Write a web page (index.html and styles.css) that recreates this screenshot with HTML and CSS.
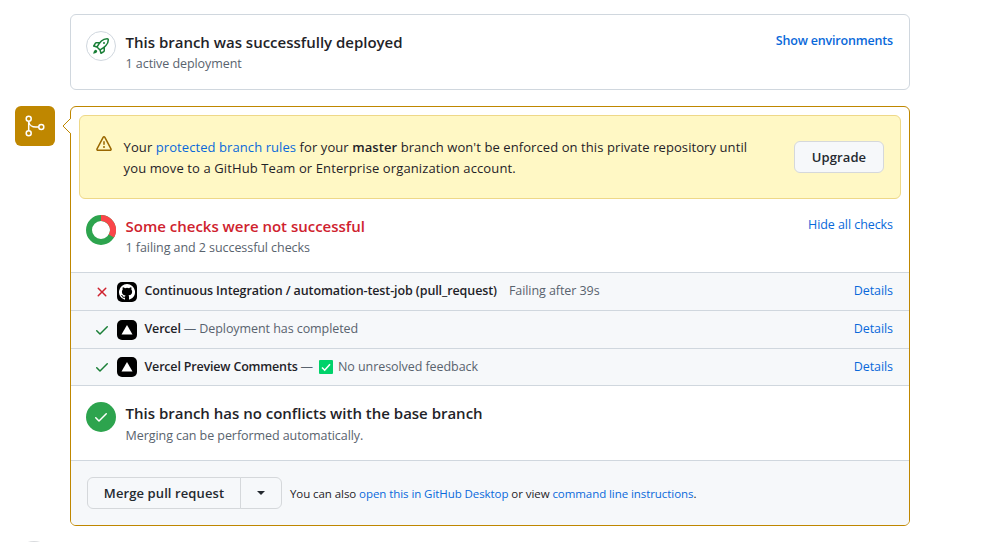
FILE: index.html
```html
<!DOCTYPE html>
<html lang="en">
<head>
<meta charset="utf-8">
<title>Merge status</title>
<link rel="stylesheet" href="styles.css">
</head>
<body>
<main class="page">
  <section class="card deploy">
    <span class="round-icon round-outline">
      <svg width="16" height="16" viewBox="0 0 16 16" fill="currentColor"><path d="M14.064 0h.186C15.216 0 16 .784 16 1.75v.186a8.752 8.752 0 0 1-2.564 6.186l-.458.459c-.314.314-.641.616-.979.904v3.207c0 .608-.315 1.172-.833 1.49l-2.774 1.707a.749.749 0 0 1-1.11-.418l-.954-3.102a1.214 1.214 0 0 1-.145-.125L3.754 9.816a1.218 1.218 0 0 1-.124-.145L.528 8.717a.749.749 0 0 1-.418-1.11l1.71-2.774A1.748 1.748 0 0 1 3.31 4h3.204c.288-.338.59-.665.904-.979l.459-.458A8.749 8.749 0 0 1 14.064 0ZM8.938 3.623h-.002l-.458.458c-.76.76-1.437 1.598-2.02 2.5l-1.5 2.317 2.143 2.143 2.317-1.5c.902-.583 1.74-1.26 2.499-2.02l.459-.458a7.25 7.25 0 0 0 2.123-5.127V1.75a.25.25 0 0 0-.25-.25h-.186a7.249 7.249 0 0 0-5.125 2.123ZM3.56 14.56c-.732.732-2.334 1.045-3.005 1.148a.234.234 0 0 1-.201-.064.234.234 0 0 1-.064-.201c.103-.671.416-2.273 1.15-3.003a1.502 1.502 0 1 1 2.12 2.12Zm6.94-3.935c-.088.06-.177.118-.266.175l-2.35 1.521.548 1.783 1.949-1.2a.25.25 0 0 0 .119-.213ZM3.678 8.116 5.2 5.766c.058-.09.117-.178.176-.266H3.309a.25.25 0 0 0-.213.119l-1.2 1.95ZM12 5a1 1 0 1 1-2 0 1 1 0 0 1 2 0Z"/></svg>
    </span>
    <div class="summary">
      <h3 class="title">This branch was successfully deployed</h3>
      <p class="sub">1 active deployment</p>
    </div>
    <a class="link strong action">Show environments</a>
  </section>

  <div class="merge">
    <div class="merge-badge">
      <svg width="24" height="24" viewBox="0 0 24 24" fill="none" stroke="currentColor" stroke-width="1.5"><circle cx="5.7" cy="4.7" r="2.5"/><circle cx="5.7" cy="19.3" r="2.5"/><circle cx="18.3" cy="13" r="2.5"/><path d="M5.7 7.2v9.600M5.700 7.500c.5 3.500 3.600 5.500 7 5.500h3.100"/></svg>
    </div>
    <section class="card merge-box">
      <svg class="pointer" width="9" height="16" viewBox="0 0 9 16"><path d="M9 .5 1 8l8 7.500Z" fill="#fff"/><path d="M8.500.500 1 8l7.500 7.500" fill="none" stroke="#bf8700"/></svg>
      <div class="warning">
        <svg class="alert" width="16" height="16" viewBox="0 0 16 16" fill="currentColor"><path d="M6.457 1.047c.659-1.234 2.427-1.234 3.086 0l6.082 11.378A1.750 1.750 0 0 1 14.082 15H1.918a1.750 1.750 0 0 1-1.543-2.575Zm1.763.707a.250.250 0 0 0-.440 0L1.698 13.132a.250.250 0 0 0 .220.368h12.164a.250.250 0 0 0 .220-.368Zm.530 3.996v2.500a.750.750 0 0 1-1.500 0v-2.500a.750.750 0 0 1 1.500 0ZM9 11a1 1 0 1 1-2 0 1 1 0 0 1 2 0Z"/></svg>
        <p class="warning-text">Your <a class="link">protected branch rules</a> for your <b>master</b> branch won't be enforced on this private repository until<br><span class="second">you move to a GitHub Team or Enterprise organization account.</span></p>
        <button class="btn upgrade">Upgrade</button>
      </div>

      <div class="row checks-head">
        <svg class="donut" width="30" height="30" viewBox="0 0 30 30"><circle cx="15" cy="15" r="12" fill="none" stroke="#2da44e" stroke-width="6"/><path d="M15 3a12 12 0 0 1 10.390 18" fill="none" stroke="#fa4549" stroke-width="6"/></svg>
        <div class="summary">
          <h3 class="title danger">Some checks were not successful</h3>
          <p class="sub">1 failing and 2 successful checks</p>
        </div>
        <a class="link action">Hide all checks</a>
      </div>

      <ul class="checks">
        <li class="check">
          <svg class="fail" width="16" height="16" viewBox="0 0 16 16" fill="currentColor"><path d="M3.720 3.720a.750.750 0 0 1 1.060 0L8 6.940l3.220-3.220a.750.750 0 1 1 1.060 1.060L9.060 8l3.220 3.220a.750.750 0 1 1-1.060 1.060L8 9.060l-3.220 3.220a.750.750 0 0 1-1.060-1.060L6.940 8 3.720 4.780a.750.750 0 0 1 0-1.060Z"/></svg>
          <span class="app"><svg width="16" height="16" viewBox="0 0 16 16" fill="#fff"><path d="M8 0a8 8 0 0 0-2.530 15.590c.400.070.550-.170.550-.380v-1.490c-2.010.370-2.530-.490-2.690-.940-.090-.230-.480-.940-.820-1.130-.280-.150-.680-.520-.010-.530.630-.010 1.080.580 1.230.820.720 1.210 1.870.870 2.330.660.070-.520.280-.870.510-1.070-1.780-.200-3.640-.890-3.640-3.950 0-.870.310-1.590.820-2.150-.080-.200-.360-1.020.080-2.120 0 0 .670-.210 2.200.820a7.420 7.420 0 0 1 4 0c1.530-1.040 2.200-.820 2.200-.820.440 1.100.160 1.920.080 2.120.510.560.820 1.270.820 2.150 0 3.070-1.870 3.750-3.650 3.950.290.250.540.730.540 1.480v2.200c0 .210.150.460.550.380A8 8 0 0 0 8 0Z"/></svg></span>
          <span class="name">Continuous Integration / automation-test-job (pull_request)</span>
          <span class="desc gap">Failing after 39s</span>
          <a class="link details">Details</a>
        </li>
        <li class="check">
          <svg class="ok" width="16" height="16" viewBox="0 0 16 16" fill="currentColor"><path d="M13.780 4.220a.750.750 0 0 1 0 1.060l-7.250 7.250a.750.750 0 0 1-1.060 0L2.220 9.280a.750.750 0 1 1 1.060-1.060L6 10.940l6.720-6.720a.750.750 0 0 1 1.060 0Z"/></svg>
          <span class="app"><svg width="12" height="10" viewBox="0 0 12 10"><path d="M6 0l5.500 9.500H.5Z" fill="#fff"/></svg></span>
          <span class="name short">Vercel</span>
          <span class="desc dash">— Deployment has completed</span>
          <a class="link details">Details</a>
        </li>
        <li class="check last">
          <svg class="ok" width="16" height="16" viewBox="0 0 16 16" fill="currentColor"><path d="M13.780 4.220a.750.750 0 0 1 0 1.060l-7.250 7.250a.750.750 0 0 1-1.060 0L2.220 9.280a.750.750 0 1 1 1.060-1.060L6 10.940l6.720-6.720a.750.750 0 0 1 1.060 0Z"/></svg>
          <span class="app"><svg width="12" height="10" viewBox="0 0 12 10"><path d="M6 0l5.500 9.500H.5Z" fill="#fff"/></svg></span>
          <span class="name short">Vercel Preview Comments</span>
          <span class="desc dash">—</span>
          <svg class="tick" width="14" height="14" viewBox="0 0 14 14"><rect width="14" height="14" rx="1" fill="#00d26a"/><path d="M3 7.500l2.700 2.700L11 4.200" fill="none" stroke="#fff" stroke-width="1.600"/></svg>
          <span class="desc plain">No unresolved feedback</span>
          <a class="link details">Details</a>
        </li>
      </ul>

      <div class="row conflicts">
        <span class="round-icon round-solid">
          <svg width="16" height="16" viewBox="0 0 16 16" fill="currentColor"><path d="M13.780 4.220a.750.750 0 0 1 0 1.060l-7.250 7.250a.750.750 0 0 1-1.060 0L2.220 9.280a.750.750 0 1 1 1.060-1.060L6 10.940l6.720-6.720a.750.750 0 0 1 1.060 0Z"/></svg>
        </span>
        <div class="summary">
          <h3 class="title">This branch has no conflicts with the base branch</h3>
          <p class="sub lower">Merging can be performed automatically.</p>
        </div>
      </div>

      <div class="footer">
        <div class="btn-group">
          <button class="btn main">Merge pull request</button>
          <button class="btn more" aria-label="Select merge method"><i class="caret"></i></button>
        </div>
        <p class="hint">You can also <a class="link">open this in GitHub Desktop</a> or view <a class="link">command line instructions</a>.</p>
      </div>
    </section>
  </div>
  <span class="avatar"></span>
</main>
</body>
</html>
```
FILE: styles.css
```css
* { box-sizing: border-box; }
body { margin: 0; background: #fff; color: #1f2328; font-family: "Open Sans", "Noto Sans", sans-serif; font-size: 12.5px; line-height: 20px; letter-spacing: -0.07px; }
h3, p, ul { margin: 0; padding: 0; }
b { font-weight: 600; }
.page { width: 910px; height: 542px; overflow: hidden; padding: 14px 0 0 15px; }
.card { border: 1px solid #d0d7de; border-radius: 6px; background: #fff; }
.link { color: #0969da; text-decoration: none; white-space: nowrap; }
.strong { font-weight: 600; letter-spacing: -0.18px; }
.title { font-size: 15px; line-height: 22px; font-weight: 600; letter-spacing: -0.01px; }
.danger { color: #cf222e; }
.sub, .desc { color: #59636e; }
.sub { line-height: 22px; }
.lower { padding-top: 1px; }
.summary { flex: 1; margin-left: 9.6px; }

.deploy { margin-left: 55px; height: 76px; display: flex; padding: 16px 16px 0 15px; }
.round-icon { width: 30px; height: 30px; border-radius: 50%; display: flex; align-items: center; justify-content: center; flex: none; }
.round-outline { border: 1px solid #d0d7de; color: #1a7f37; }
.round-solid { background: #2da44e; color: #fff; }

.merge { display: flex; margin-top: 16px; gap: 15px; }
.merge-badge { width: 40px; height: 40px; border-radius: 6px; background: #bf8700; color: #fff; display: flex; align-items: center; justify-content: center; flex: none; }
.merge-box { flex: 1; height: 420px; border-color: #bf8700; position: relative; }
.pointer { position: absolute; left: -9px; top: 11px; }

.warning { margin: 8px 8px 0; height: 84px; border: 1px solid #eed888; border-radius: 6px; background: #fff8c5; display: flex; padding: 20px 16px 0; }
.alert { color: #9a6700; flex: none; }
.warning-text { flex: 1; margin: 1px 0 0 11.6px; font-size: 13px; line-height: 21px; letter-spacing: 0.08px; white-space: nowrap; }
.second { letter-spacing: 0.11px; }
.btn { font-family: inherit; font-size: 13px; font-weight: 600; color: #24292f; height: 32px; border: 1px solid #d5d8db; border-radius: 6px; background: #f6f8fa; padding: 0; letter-spacing: 0.1px; }
.upgrade { width: 90px; margin-top: 5px; }

.row { display: flex; padding: 16px 16px 0 15px; }
.checks-head { height: 73px; }
.checks { list-style: none; }
.check { height: 38px; border-top: 1px solid #d0d7de; background: #f6f8fa; display: flex; align-items: center; padding: 0 16px 0 23px; white-space: nowrap; }
.last { height: 37px; }
.name, .desc, .details { margin-bottom: 1px; }
.name { font-weight: 600; margin-left: 7.5px; letter-spacing: -0.1px; }
.short { letter-spacing: -0.18px; }
.app { width: 20px; height: 20px; border-radius: 5px; background: #000; display: flex; align-items: center; justify-content: center; margin-left: 7px; }
.fail { color: #cf222e; }
.ok { color: #1a7f37; }
.desc { margin-left: 4px; }
.gap { margin-left: 12px; }
.dash { margin-left: 3px; }
.plain { margin-left: 0; }
.tick { margin: 0 5px 0 6px; }
.details { margin-left: auto; }

.conflicts { height: 75px; border-top: 1px solid #d0d7de; }
.footer { height: 65px; border-top: 1px solid #d0d7de; border-radius: 0 0 5px 5px; background: #f6f8fa; display: flex; padding: 16px 16px; }
.btn-group { display: flex; }
.main { width: 154px; border-radius: 6px 0 0 6px; }
.more { width: 42px; margin-left: -1px; border-radius: 0 6px 6px 0; display: flex; align-items: center; justify-content: center; }
.caret { border: 4px solid transparent; border-top-color: #24292f; border-bottom: 0; }
.hint { margin-left: 8px; font-size: 11.5px; line-height: 34px; white-space: nowrap; }
.avatar { display: block; width: 40px; height: 40px; margin: 15px 0 0 -1px; border-radius: 50%; background: #d8dadd; }
```
